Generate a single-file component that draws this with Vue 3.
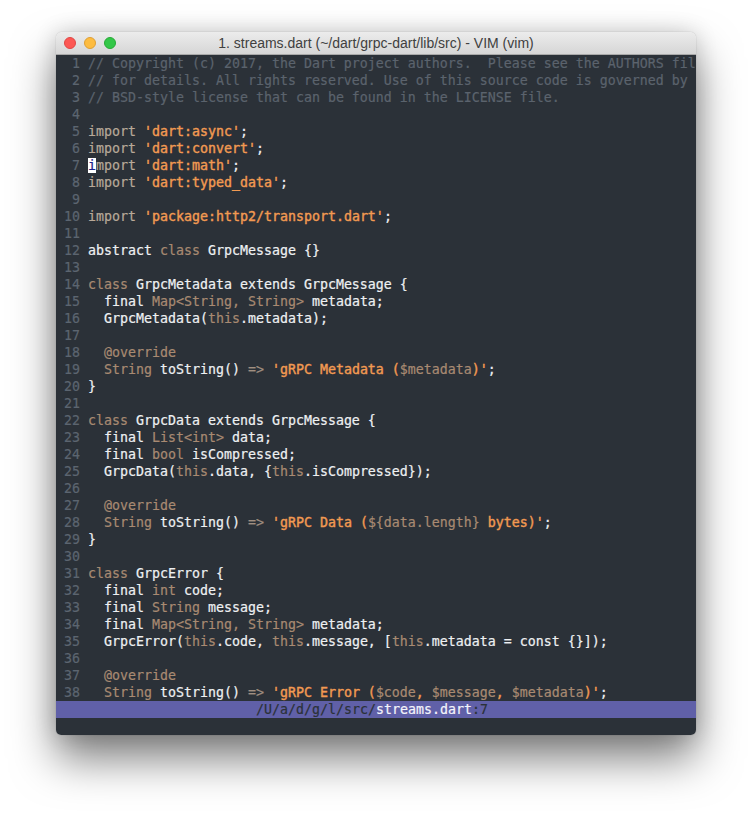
<script setup>
const C = 'c', K = 'k', T = 't', S = 's', N = 'n', P = 'p'
const lines = [
  [[C, '// Copyright (c) 2017, the Dart project authors.  Please see the AUTHORS fil']],
  [[C, '// for details. All rights reserved. Use of this source code is governed by']],
  [[C, '// BSD-style license that can be found in the LICENSE file.']],
  [],
  [[K, 'import '], [S, "'dart:async'"], [N, ';']],
  [[K, 'import '], [S, "'dart:convert'"], [N, ';']],
  [['cur', 'i'], [K, 'mport '], [S, "'dart:math'"], [N, ';']],
  [[K, 'import '], [S, "'dart:typed_data'"], [N, ';']],
  [],
  [[K, 'import '], [S, "'package:http2/transport.dart'"], [N, ';']],
  [],
  [[N, 'abstract '], [T, 'class'], [N, ' GrpcMessage {}']],
  [],
  [[T, 'class'], [N, ' GrpcMetadata extends GrpcMessage {']],
  [[N, '  final '], [T, 'Map<String, String>'], [N, ' metadata;']],
  [[N, '  GrpcMetadata('], [T, 'this'], [N, '.metadata);']],
  [],
  [[T, '  @override']],
  [[T, '  String'], [N, ' toString() '], [P, '=>'], [N, ' '], [S, "'gRPC Metadata ("], [T, '$metadata'], [S, ")'"], [N, ';']],
  [[N, '}']],
  [],
  [[T, 'class'], [N, ' GrpcData extends GrpcMessage {']],
  [[N, '  final '], [T, 'List<int>'], [N, ' data;']],
  [[N, '  final '], [T, 'bool'], [N, ' isCompressed;']],
  [[N, '  GrpcData('], [T, 'this'], [N, '.data, {'], [T, 'this'], [N, '.isCompressed});']],
  [],
  [[T, '  @override']],
  [[T, '  String'], [N, ' toString() '], [P, '=>'], [N, ' '], [S, "'gRPC Data ("], [T, '${data.length}'], [S, " bytes)'"], [N, ';']],
  [[N, '}']],
  [],
  [[T, 'class'], [N, ' GrpcError {']],
  [[N, '  final '], [T, 'int'], [N, ' code;']],
  [[N, '  final '], [T, 'String'], [N, ' message;']],
  [[N, '  final '], [T, 'Map<String, String>'], [N, ' metadata;']],
  [[N, '  GrpcError('], [T, 'this'], [N, '.code, '], [T, 'this'], [N, '.message, ['], [T, 'this'], [N, '.metadata = const {}]);']],
  [],
  [[T, '  @override']],
  [[T, '  String'], [N, ' toString() '], [P, '=>'], [N, ' '], [S, "'gRPC Error ("], [T, '$code'], [S, ', '], [T, '$message'], [S, ', '], [T, '$metadata'], [S, ")'"], [N, ';']],
]
</script>

<template>
  <div class="page">
    <div class="window">
      <div class="titlebar">
        <div class="lights">
          <span class="light red"></span>
          <span class="light yellow"></span>
          <span class="light green"></span>
        </div>
        <div class="title">1. streams.dart (~/dart/grpc-dart/lib/src) - VIM (vim)</div>
      </div>
      <div class="editor">
        <div v-for="(line, i) in lines" :key="i" class="line">
          <span class="num">{{ i + 1 }}</span>
          <span class="code"><span v-for="(tok, j) in line" :key="j" :class="tok[0]">{{ tok[1] }}</span></span>
        </div>
        <div class="status">
          <span class="dim">/U/a/d/g/l/src/</span><span class="file">streams.dart</span><span class="dim">:7</span>
        </div>
        <div class="cmd"></div>
      </div>
    </div>
  </div>
</template>

<style>
html, body { margin: 0; background: #fff; }
</style>

<style scoped>
.page {
  width: 752px;
  height: 815px;
  padding: 32px 56px 0;
  box-sizing: border-box;
  background: #fff;
  overflow: hidden;
}
.window {
  width: 640px;
  height: 703px;
  border-radius: 6px 6px 5px 5px;
  overflow: hidden;
  box-shadow: 0 24px 44px rgba(0, 0, 0, 0.5), 0 0 1px rgba(0, 0, 0, 0.35), 0 0 22px rgba(0, 0, 0, 0.16);
}
.titlebar {
  position: relative;
  height: 22px;
  display: flex;
  align-items: center;
  justify-content: center;
  background: linear-gradient(#ececec, #d6d6d6);
  border-bottom: 1px solid #a9a9a9;
}
.lights {
  position: absolute;
  left: 8px;
  top: 5px;
  display: flex;
  gap: 8px;
}
.light {
  width: 12px;
  height: 12px;
  border-radius: 50%;
  box-sizing: border-box;
}
.red { background: #fc5753; border: 1px solid #df4744; }
.yellow { background: #fdbc40; border: 1px solid #de9f34; }
.green { background: #33c748; border: 1px solid #27aa35; }
.title {
  font: 14px/22px "Liberation Sans", Arial, sans-serif;
  color: #404040;
}
.editor {
  height: 680px;
  background: #2b3138;
  font-family: "DejaVu Sans Mono", monospace;
  font-size: 13.29px;
  line-height: 17px;
  white-space: pre;
  color: #eef0f2;
  -webkit-text-stroke: 0.2px currentColor;
}
.line {
  height: 17px;
  display: flex;
  overflow: hidden;
}
.num {
  width: 24px;
  margin-right: 8px;
  text-align: right;
  color: #5c6570;
  flex: none;
}
.code { flex: none; }
.c { color: #5b636d; }
.k { color: #b8a999; }
.t { color: #a88a72; }
.s { color: #f29a52; -webkit-text-stroke: 0.4px currentColor; }
.p { color: #a08f80; }
.n { color: #eef0f2; }
.cur {
  background: linear-gradient(#fff, #fff) center / 100% 15px no-repeat;
  color: #1a1f8a;
}
.status {
  height: 17px;
  background: #6060a8;
  text-align: center;
  padding-right: 8px;
}
.dim { color: #2b3138; }
.file { color: #f4f4fb; }
.cmd { height: 17px; }
</style>
